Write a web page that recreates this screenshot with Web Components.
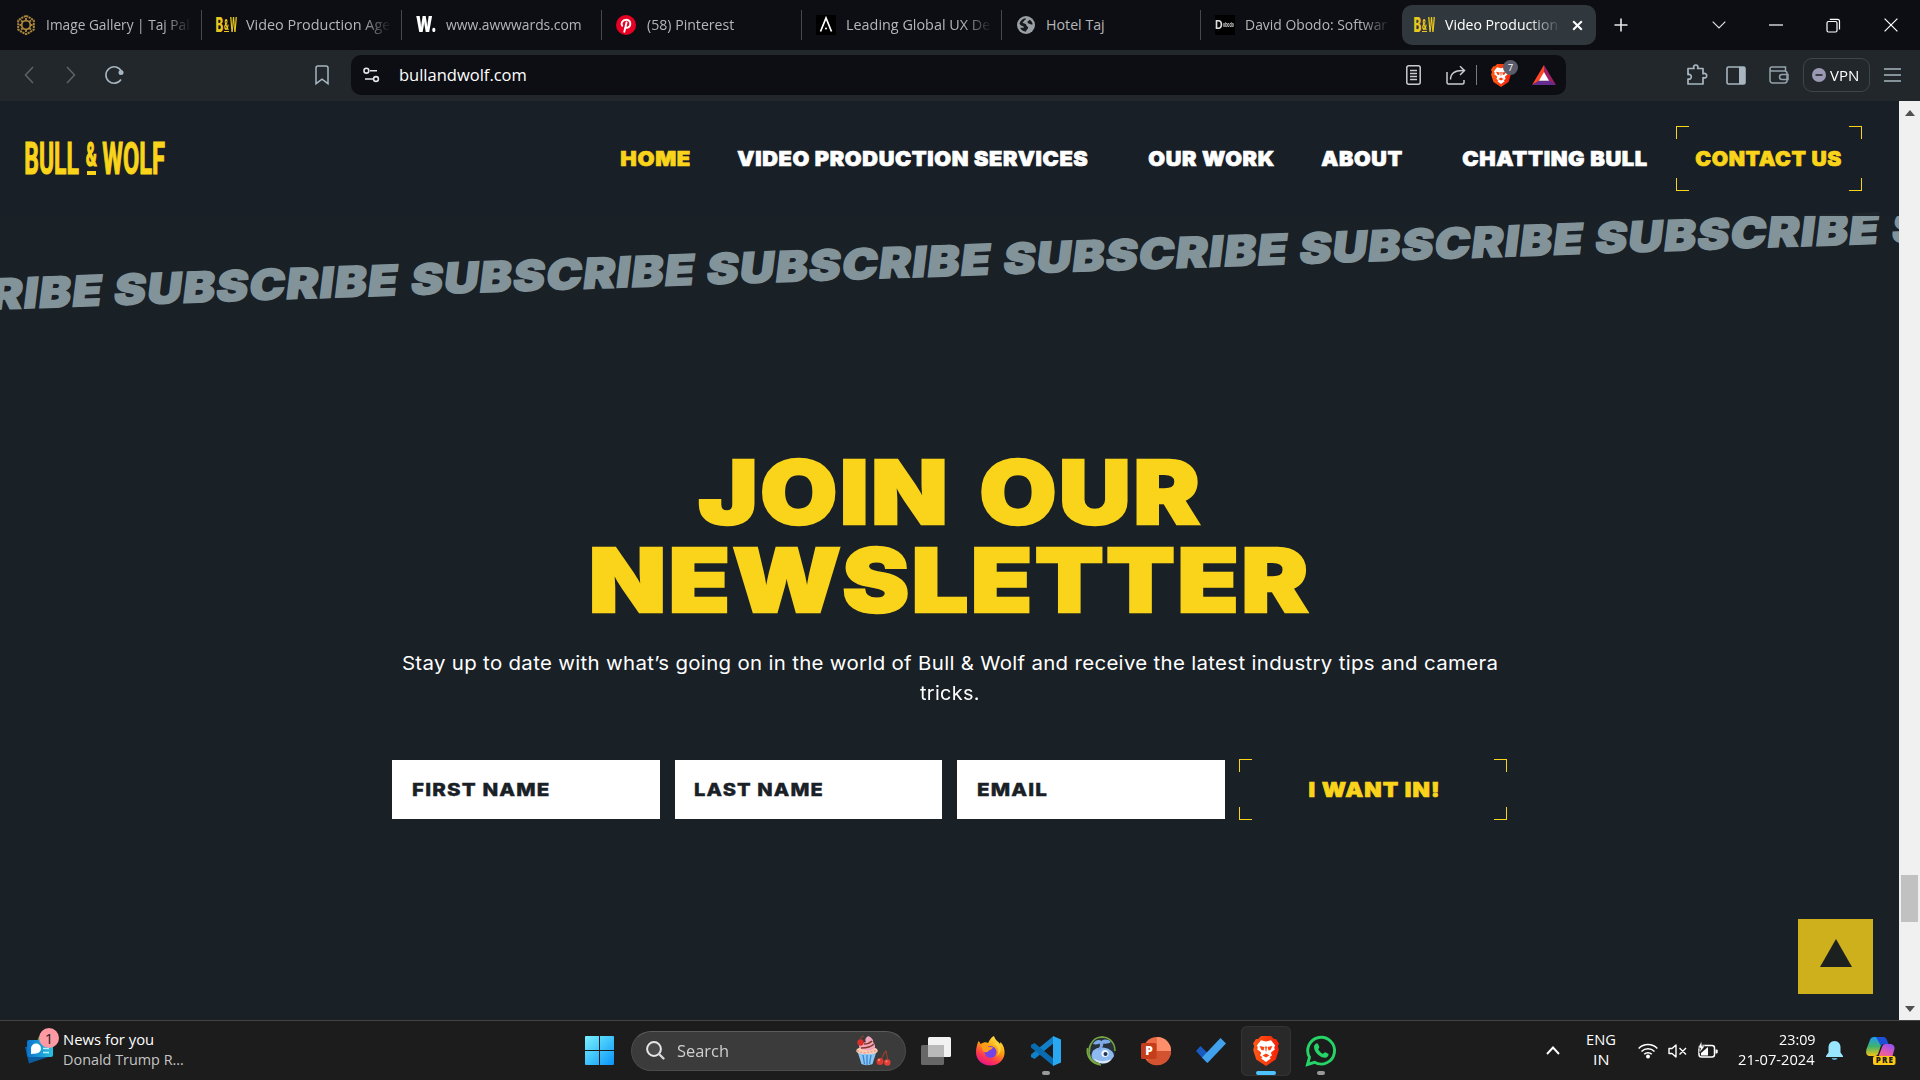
<!DOCTYPE html>
<html lang="en">
<head>
<meta charset="utf-8">
<title>Video Production Agency</title>
<style>
html,body{margin:0;height:100%;background:#192026;overflow:hidden}
body{display:flex;flex-direction:column;width:1920px;height:1080px;font-family:"Open Sans","Noto Sans",sans-serif}
</style>
</head>
<body>
<tab-strip></tab-strip>
<tool-bar></tool-bar>
<web-view></web-view>
<task-bar></task-bar>
<script>
const ICONS = {
taj:[20,20,`<g fill="none" stroke="#a9853c" stroke-width="1.5"><circle cx="10" cy="10" r="4.3" stroke-width="1.8"/><path d="M10 .8l3.6 1.7 4.2 3v9l-4.2 3L10 19.2l-3.600-1.700-4.200-3v-9l4.200-3z" stroke-width="2" stroke-dasharray="2.200 .7"/><path d="M10 3v2.500M10 14.500V17M3.500 10h2.200M14.300 10h2.200M5 5.500l2 1.500M13 13l2 1.500M15 5.500L13 7M7 13l-2 1.500" stroke-width="1.900"/></g>`],
pin:[20,20,`<circle cx="10" cy="10" r="10" fill="#e60023"/><path d="M8.300 16.800L10.600 7.300M9.500 11.800c1 1.800 4.800 1.100 4.800-3.200 0-2.400-1.800-3.900-4.200-3.900-3.900 0-5.500 3.900-3.900 6.100" fill="none" stroke="#fff" stroke-width="1.900" stroke-linecap="round"/>`],
ux:[20,20,`<rect width="20" height="20" fill="#000"/><path d="M4.500 16.500L10 3l5.500 13.500" fill="none" stroke="#fff" stroke-width="1.700"/><circle cx="10" cy="13.500" r="1" fill="#fff"/>`],
globe:[20,20,`<circle cx="10" cy="10" r="9" fill="#9aa0a6"/><path d="M3.500 8.500c1-3 3-4.800 6.200-5.200.5 1.300-.5 2-1.700 2.300.2 1.300-1.200 1.500-1.500 2.500 1.800.3 3.800.6 4 2.300.3 1.300 1.700.9 1.600 2.400-.1 1.600-1.700 1.200-2 3.900-2.800 0-5-1.600-6-3.900h3.500c.9-.7-.1-1.800-1.500-1.900C5 10.500 4 10 3.500 8.500zM11.300 6.700c1.500-.3 1.200-1.700 2.500-2 1.500 1 2.700 2.800 2.900 4.700-1.400.4-2.600.2-3.200-.6-.8-.2-1.700-.6-2.200-2.100z" fill="#171a1f"/>`],
close:[12,12,`<path d="M1.300 1.300l9.400 9.400M10.700 1.300L1.300 10.700" stroke="#fff" stroke-width="2.200"/>`],
plus:[14,14,`<path d="M7 .5v13M.5 7h13" stroke="#e8e8ea" stroke-width="1.600"/>`],
chevd:[14,8,`<path d="M.7.7L7 7l6.300-6.300" fill="none" stroke="#e0e0e0" stroke-width="1.200"/>`],
min:[14,2,`<path d="M0 1h14" stroke="#fff" stroke-width="1.200"/>`],
restore:[15,15,`<rect x="1" y="3.500" width="10" height="10.500" rx="1.500" fill="none" stroke="#fff" stroke-width="1.200"/><path d="M3.800 1.300h7.700a2 2 0 012 2v8.200" fill="none" stroke="#fff" stroke-width="1.200"/>`],
x:[14,14,`<path d="M.6.6l12.800 12.800M13.400.6L.6 13.400" stroke="#fff" stroke-width="1.200"/>`],
back:[10,18,`<path d="M9 1L1.500 9 9 17" fill="none" stroke="#5c6468" stroke-width="1.500"/>`],
fwd:[10,18,`<path d="M1 1l7.500 8L1 17" fill="none" stroke="#5c6468" stroke-width="1.500"/>`],
reload:[20,20,`<path d="M17 14.500A8.200 8.200 0 1117.300 6" fill="none" stroke="#a7b6c0" stroke-width="1.600"/><circle cx="17" cy="7.600" r="2.500" fill="#a7b6c0"/>`],
bookmark:[14,20,`<path d="M1 3a2 2 0 012-2h8a2 2 0 012 2v15.700l-6-4.500-6 4.500z" fill="none" stroke="#a7b6c0" stroke-width="1.500"/>`],
tune:[17,16,`<g fill="none" stroke="#e3e5e8" stroke-width="1.600"><circle cx="3.400" cy="3.700" r="2.400"/><path d="M7 3.700h7M2 12h8"/><circle cx="13" cy="12" r="2.400"/></g>`],
reader:[15,20,`<rect x=".8" y=".8" width="13.400" height="18.400" rx="2" fill="none" stroke="#c8cbd0" stroke-width="1.500"/><path d="M4 5.500h7M4 8.500h7M4 11.500h7M4 14.500h7" stroke="#c8cbd0" stroke-width="1.300"/>`],
share:[20,20,`<g fill="none" stroke="#c8cbd0" stroke-width="1.500"><path d="M1 7v10.500a1.500 1.500 0 001.500 1.500h14a1.500 1.500 0 001.500-1.500V15M4.500 14.500c0-6 4-9.500 13.500-9M14 1.200L18.500 5.500 14 10"/></g>`],
brave:[26,30,`<defs><linearGradient id="b"><stop offset="0" stop-color="#ff5a14"/><stop offset="1" stop-color="#f5200a"/></linearGradient></defs><path d="M8 0h10l3 3h2l3 4.500-1.200 2.600 1 3.900-3 9.500L13 30 3.200 23.500l-3-9.500 1-3.900L0 7.500 3 3h2z" fill="url(#b)"/><path d="M13 5.500l5-1.300 4.200 5.300-1 1.700.5 2.200-3.500 3.600.7 2.500-2.400 1.700 1.300 1.200L13 26l-4.800-3.600 1.300-1.200-2.400-1.700.7-2.500-3.500-3.600.5-2.200-1-1.700L8 4.200z" fill="#fff"/><path d="M6.500 10l5 1-1 3.500-2-.5zM19.500 10l-5 1 1 3.500 2-.5zM9.500 19.500L13 17.500l3.500 2L13 21.500zM12 10.500h2l-.7 5h-.6zM5 14l3 2.500-.5 2zM21 14l-3 2.500.5 2z" fill="#fb4212"/>`],
bat:[24,20,`<path d="M12 0L0 20l12-6.700z" fill="#ff4724"/><path d="M12 0l12 20-7.500-4L12 8z" fill="#9e1f63"/><path d="M0 20h24l-7-4.500H7z" fill="#662d91"/><path d="M12 7l5 8.700H7z" fill="#fff"/>`],
ext:[22,22,`<path d="M2 4.500h6c-1-2 .2-3.500 1.800-3.500s2.800 1.500 1.800 3.500H17v5.300c2-1 3.700.2 3.700 1.900s-1.700 2.900-3.700 1.900V20H2v-5c2 .6 3.300-.5 3.300-2.200S4 10 2 10.600z" fill="none" stroke="#a7b6c0" stroke-width="1.700" stroke-linejoin="round"/>`],
side:[20,19,`<rect x="1" y="1" width="18" height="17" rx="1.500" fill="none" stroke="#a7b6c0" stroke-width="1.600"/><path d="M13 1h6v17h-6z" fill="#a7b6c0"/>`],
wallet:[20,18,`<g fill="none" stroke="#93a2aa" stroke-width="1.500"><path d="M1 2.500v12A2.500 2.500 0 003.500 17h12a2.500 2.500 0 002.500-2.500V7.500A2.500 2.500 0 0015.500 5H3a1.800 1.800 0 010-4h13.500V5"/><path d="M19 8.500h-6a2.500 2.500 0 000 5h6z"/></g>`],
vpn:[14,14,`<circle cx="7" cy="7" r="7" fill="#9a98b2"/><path d="M3.500 7h7" stroke="#22272b" stroke-width="1.600"/>`],
menu:[17,14,`<path d="M0 1h17M0 7h17M0 13h17" stroke="#a7b6c0" stroke-width="1.400"/>`],
tri:[32,28,`<path d="M16 0l16 28H0z" fill="#1c201f"/>`],
up:[10,6,`<path d="M5 0l5 6H0z" fill="#505050"/>`],
down:[10,6,`<path d="M0 0h10L5 6z" fill="#505050"/>`],
news:[28,28,`<defs><linearGradient id="n" x1="0" x2="1"><stop offset="0" stop-color="#0873cf"/><stop offset="1" stop-color="#2cc0df"/></linearGradient></defs><path d="M11 8l3-8h8v10z" fill="#3fa34d"/><path d="M0 11l24-3 2 12L4 27.500z" fill="#0c5ca0"/><rect x="2" y="4" width="26" height="17" rx="2" fill="url(#n)"/><circle cx="11" cy="12.500" r="5" fill="#fff"/><path d="M6 18v-5l5 4.500z" fill="#fff"/><path d="M18 12.500h6M18 16.500h6" stroke="#b8f1ff" stroke-width="1.600"/>`],
win:[29,29,`<defs><linearGradient id="w" x1="0" y1="0" x2="1" y2="1"><stop offset="0" stop-color="#7bf0ff"/><stop offset=".5" stop-color="#3fc4fb"/><stop offset="1" stop-color="#0a93f8"/></linearGradient></defs><path d="M1 0h13v14H0V1a1 1 0 011-1zM15 0h13a1 1 0 011 1v13H15zM0 15h14v14H1a1 1 0 01-1-1zM15 15h14v13a1 1 0 01-1 1H15z" fill="url(#w)"/>`],
search:[19,19,`<circle cx="8" cy="8" r="6.900" fill="#4a4a4a" stroke="#e4e6e8" stroke-width="2"/><path d="M13 13l4.500 4.500" stroke="#d5d8dc" stroke-width="2.400" stroke-linecap="round"/>`],
cake:[36,30,`<path d="M3 17h18l-3.500 11c-3 1.500-8 1.500-11 0z" fill="#8ec7f2"/><path d="M8 19l1.500 9M12 19v10M16 19l-1.500 9" stroke="#3d86d8" stroke-width="1.400"/><path d="M2 13c4-3 17-3 20 0 2 3 0 5-10 5S0 16 2 13z" fill="#f6cfae"/><path d="M2 14.500q5 3 10 2t10-2" fill="none" stroke="#f49aa8" stroke-width="1.600" stroke-dasharray="2 1.500"/><path d="M4 11c0-4 4-4 7-5-2-3 1-5 2-6 3 1 6 4 5 6 2 2 3 5 1 7-3 2-13 2-15-2z" fill="#f3a6bd"/><path d="M6 12c5 0 10-1 13-4M9 8c4 0 6-1 8-3" fill="none" stroke="#843b2c" stroke-width="1.700"/><circle cx="5.500" cy="6.500" r="3.200" fill="#d9302a"/><path d="M5.500 4Q5 1 9 0M26 24q2-6 5-9 1 5 2 10" fill="none" stroke="#9b3f2b" stroke-width="1.100"/><circle cx="25" cy="25.500" r="3.500" fill="#df3a2f"/><circle cx="32.300" cy="26.500" r="3.200" fill="#e5403a"/><circle cx="24" cy="24" r="1" fill="#ff9a80"/><circle cx="31.500" cy="25.300" r=".9" fill="#ff9a80"/>`],
tview:[30,28,`<rect x="0" y="8" width="23" height="20" rx="1.500" fill="#676767"/><rect x="7" y="0" width="23" height="20" rx="1.500" fill="#f2f2f2"/><path d="M7 8h16v12H7z" fill="#b9b9b9"/>`],
fox:[29,30,`<defs><linearGradient id="f" x1=".8" y1="0" x2=".3" y2="1"><stop offset="0" stop-color="#fff04a"/><stop offset=".45" stop-color="#ff980e"/><stop offset=".75" stop-color="#ff3750"/><stop offset="1" stop-color="#e3128c"/></linearGradient></defs><path d="M2.500 5c1 1 1.500 1.500 2 3C8 6 10 6 12 7c1-1 2-5 6-7 1 4 4 5 6 8l.5-2c3 3 4.500 7 4 12-1 7-7 11.500-14 11.500C6 29.500 0 24 0 16c0-4 1-7 2.500-11z" fill="url(#f)"/><circle cx="14.500" cy="16" r="6" fill="#7542e5"/><path d="M5 9c3-1.500 6 0 7 2 2 0 4-.5 5 .5-1 2-3 2-4.500 3.500-2 2-4.500 1-5.500 0z" fill="#ff9a1a"/><path d="M17 8c5 1 7 7 4 12 5-4 5-10 1-14z" fill="#ffd23a"/>`],
code:[30,30,`<path d="M22.500 0v7.500L3.500 23 0 21v-2.500z" fill="#1180c8"/><path d="M0 9l3.500-2 19 15.500V30L0 11.500z" fill="#0a6cb0"/><path d="M22.500 7.500L13.400 15l9.100 7.500z" fill="#1c1c1c"/><path d="M22 0l8 3.500v23L22 30z" fill="#2aa8f2"/>`],
bird:[30,30,`<circle cx="15.500" cy="15" r="13.500" fill="#27313a"/><path d="M5.500 20c0-7 6-8.500 11-8.500S28 15 28 20c-2 4-7 6.500-12 6.500S6 25 5.500 20z" fill="#8db9f0"/><path d="M7 8c2-4 6-5 8.500-3C18 3 22 3 25 6c-2 1.500-5 2-7.500 1.500-.5 2.500-1 4.500-3.500 7l-3-1c3-2 3.500-4 2.500-6C11.500 8.500 9 8.700 7 8z" fill="#7eaae8"/><path d="M8 22.500q7 5 18 .5-4 5-10 4.500T8 22.500z" fill="#dce9f8"/><circle cx="19" cy="17.500" r="3.600" fill="#eef6ff"/><circle cx="19.500" cy="18" r="2" fill="#1e3552"/><path d="M15 29C5 28 0 20 1.500 12M20 1.500C9-1 3 7 3.500 16M29 15C29 5 21-1 13 1.500M7 5C0 13 2 26 14 28" fill="none" stroke="#78a840" stroke-width="1.500"/>`],
ppt:[30,28,`<circle cx="16" cy="14" r="14" fill="#ed6c47"/><path d="M16 0a14 14 0 0114 14H16z" fill="#ff8f6b"/><path d="M16 14h14A14 14 0 016 24z" fill="#d35230"/><rect x="0" y="6" width="15.500" height="16" rx="1.500" fill="#c43e1c"/><text x="4.200" y="18.300" font-family="Open Sans" font-weight="800" font-size="12" fill="#fff">P</text>`],
todo:[30,25,`<path d="M4.500 8L15.500 19l-5 5.500L0 13z" fill="#185abd"/><path d="M24.500 0L30 5.500 11.500 25 6 19.500z" fill="#42a1ec"/>`],
wa:[30,30,`<path d="M1.500 28.500l2-7.200a13.400 13.400 0 115 5z" fill="#1c1c1c" stroke="#25d366" stroke-width="2.900"/><path d="M9.500 8c1.500-1.500 2.500-.5 3 1l.8 2c.2 1-1.300 1.800-1 2.500 1 2 2.500 3.300 4.500 4.200.8.200 1.500-1.700 2.400-1.400l3 1.500c1 .7-.2 3.500-2.500 4-4 .8-12-5-11.700-11 0-1 .5-2 1.500-2.800z" fill="#25d366"/>`],
chevu:[14,9,`<path d="M1 8l6-6.500L13 8" fill="none" stroke="#fff" stroke-width="1.900"/>`],
wifi:[20,16,`<g fill="none" stroke="#fff" stroke-width="1.500"><path d="M.7 5.500a13 13 0 0118.600 0M3.500 8.500a9.200 9.200 0 0113 0M6.200 11.300a5.300 5.300 0 017.600 0"/></g><circle cx="10" cy="13.500" r="2" fill="#fff"/>`],
mute:[19,14,`<path d="M1 4.500h3L8 1v12L4 9.500H1zM11.500 4l6.500 6.500M18 4l-6.500 6.500" fill="none" stroke="#fff" stroke-width="1.400" stroke-linejoin="round"/>`],
batt:[20,17,`<rect x="1" y="4.500" width="15.500" height="11.500" rx="2.500" fill="none" stroke="#fff" stroke-width="1.500"/><path d="M17.500 8.500h1.200a1 1 0 011 1v2a1 1 0 01-1 1h-1.200z" fill="#fff"/><path d="M3 14.500V12l7-6v8.500z" fill="#fff"/><path d="M3.500 0L0 7h2.500L1.500 12 7 5H4z" fill="#fff" stroke="#1c1c1c" stroke-width=".6"/>`],
bell:[17,20,`<path d="M8.500 0c4 0 6 3 6 6.500v5L17 15v1H0v-1l2.500-3.500v-5C2.500 3 4.500 0 8.500 0z" fill="#98e6ff"/><path d="M5.500 17h6q-.5 2-3 2t-3-2z" fill="#5bb0cc"/>`],
pilot:[30,28,`<defs><linearGradient id="p" x1="0" y1="0" x2="0" y2="1"><stop offset="0" stop-color="#1f9bf0"/><stop offset=".5" stop-color="#3fb36b"/><stop offset="1" stop-color="#f4c415"/></linearGradient><linearGradient id="q" x1=".7" y1="0" x2=".2" y2="1"><stop offset="0" stop-color="#9a52f0"/><stop offset=".5" stop-color="#e85aa8"/><stop offset="1" stop-color="#fb7a4a"/></linearGradient></defs><path d="M8 0h10l-6 17q-1 2-3 2H3Q-1 18 .5 12L4 3q1-3 4-3z" fill="url(#p)"/><path d="M10 0h7q3 0 4 3l1.500 4H18q-2 0-3 2z" fill="#1d4fd8"/><path d="M19 7h6q4 1 3.500 5L25 24H9l3-3 4-11q1-3 3-3z" fill="url(#q)"/><rect x="7" y="19" width="22.500" height="9" rx="2" fill="#ffc814"/><text x="9.800" y="26.400" font-family="Open Sans" font-weight="800" font-size="8" textLength="17" fill="#1c1c1c">PRE</text>`]
};
const make=(tag,html,hook)=>customElements.define(tag,class extends HTMLElement{
  connectedCallback(){
    if(this.shadowRoot)return;
    const t=document.createElement('template');
    t.innerHTML=typeof html==='function'?html(this):html;
    this.attachShadow({mode:'open'}).append(t.content.cloneNode(true));
    if(hook)hook(this);
  }
});
make('ui-icon',el=>{
  const [w,h,body]=ICONS[el.getAttribute('name')];
  const W=el.getAttribute('w')||w,H=el.getAttribute('h')||h;
  return `<style>:host{display:block;flex:none;width:${W}px;height:${H}px}svg{display:block;overflow:visible}</style><svg width="${W}" height="${H}" viewBox="0 0 ${w} ${h}" preserveAspectRatio="none">${body}</svg>`;
});
/* Text whose ink is stretched to an exact width. */
const ctx=document.createElement('canvas').getContext('2d');
make('fit-text',el=>`<style>:host{display:block;flex:none;width:${el.getAttribute('w')}px;white-space:pre}span{display:inline-block;transform-origin:0 50%}</style><span><slot></slot></span>`,el=>{
  const c=getComputedStyle(el);
  ctx.font=`${c.fontWeight} ${c.fontSize} ${c.fontFamily}`;
  ctx.letterSpacing=c.letterSpacing==='normal'?'0px':c.letterSpacing;
  ctx.wordSpacing=c.wordSpacing==='normal'?'0px':c.wordSpacing;
  const m=ctx.measureText(el.textContent);
  const stroke=parseFloat(c.webkitTextStrokeWidth)||0;
  const L=m.actualBoundingBoxLeft+stroke/2,ink=L+m.actualBoundingBoxRight+stroke/2;
  el.shadowRoot.querySelector('span').style.transform=`scaleX(${el.getAttribute('w')/ink}) translateX(${L}px)`;
});
make('bw-mark',`<style>:host{display:flex;flex:none;width:20px;height:20px;align-items:center;font:800 20px/20px Inter,sans-serif;color:#e9c81e;gap:1px}.a{font-size:14px}span{display:block;border-bottom:1.500px solid}</style><fit-text w="7">B</fit-text><span><fit-text class="a" w="5" style="line-height:13px">&amp;</fit-text></span><fit-text w="7">W</fit-text>`);
make('browser-tab',el=>`<style>
:host{display:flex;flex:none;box-sizing:border-box;width:200px;height:30px;align-items:center;padding-left:16px;gap:10.500px;color:#b5b6b9;font-size:14.800px;line-height:24px}
.t{flex:none;width:145px;overflow:hidden;margin-top:-2px}
:host([cut]) .t{-webkit-mask-image:linear-gradient(90deg,#000 116px,transparent 145px)}
:host([line]){border-right:1px solid #46484c}
:host([active]){width:194px;height:40px;margin-left:2px;padding-left:12px;background:#30383d;border-radius:10px;color:#fff}
:host([active]) .t{width:114px;-webkit-mask-image:linear-gradient(90deg,#000 83px,transparent 116px)}
</style><slot name="icon"></slot><div class="t"><slot></slot></div><slot name="end"></slot>`);
make('tab-strip',`<style>:host{display:flex;flex:none;height:50px;background:#0d0e13;align-items:center}
.w{font:900 21px/20px Inter,sans-serif;color:#fff}.box{width:20px;height:20px;background:#000;color:#ddd;display:flex;align-items:center;font:700 12px/14px Inter,sans-serif}</style>
<browser-tab line cut style="width:202px"><ui-icon slot="icon" name="taj"></ui-icon><fit-text w="142">Image Gallery | Taj Pal</fit-text></browser-tab>
<browser-tab line cut style="padding-left:13.500px"><bw-mark slot="icon"></bw-mark><fit-text w="144">Video Production Age</fit-text></browser-tab>
<browser-tab line style="padding-left:14px;gap:10px"><fit-text slot="icon" class="w" w="20">W.</fit-text><fit-text w="135">www.awwwards.com</fit-text></browser-tab>
<browser-tab line style="padding-left:14px"><ui-icon slot="icon" name="pin"></ui-icon><fit-text w="87">(58) Pinterest</fit-text></browser-tab>
<browser-tab line cut style="padding-left:14px"><ui-icon slot="icon" name="ux"></ui-icon><fit-text w="143">Leading Global UX De</fit-text></browser-tab>
<browser-tab line style="padding-left:14px;width:199px"><ui-icon slot="icon" name="globe"></ui-icon><fit-text w="57">Hotel Taj</fit-text></browser-tab>
<browser-tab cut style="padding-left:14px;width:199px"><div slot="icon" class="box"><fit-text w="8">D</fit-text><fit-text w="11" style="font-size:6px">obodo</fit-text></div><fit-text w="141">David Obodo: Softwar</fit-text></browser-tab>
<browser-tab active><bw-mark slot="icon"></bw-mark><fit-text w="112">Video Production</fit-text><ui-icon slot="end" name="close" w="11" h="11" style="margin-left:3px"></ui-icon></browser-tab>
<ui-icon name="plus" style="margin-left:18px"></ui-icon>
<ui-icon name="chevd" style="margin-left:84px"></ui-icon>
<ui-icon name="min" style="margin-left:43px"></ui-icon>
<ui-icon name="restore" style="margin-left:43px"></ui-icon>
<ui-icon name="x" style="margin-left:42.500px"></ui-icon>`);
make('tool-bar',`<style>:host{display:flex;flex:none;height:51px;background:#22272b;align-items:center;box-sizing:border-box;padding-bottom:1px}
.addr{display:flex;align-items:center;box-sizing:border-box;width:1215px;height:40px;margin-left:22px;padding-left:12px;background:#0d0e13;border-radius:10px;color:#fff;font-size:16px;line-height:24px}
.sep{width:1px;height:20px;background:#777a80;margin-left:10px}
.br{position:relative;margin-left:14px}.bd{position:absolute;left:12px;top:-4px;width:15px;height:15px;border-radius:8px;background:#5a5c6c;color:#fff;font-size:9.500px;line-height:15px;text-align:center}
.vpn{display:flex;align-items:center;box-sizing:border-box;width:67px;height:34px;margin-left:14px;border:1.500px solid #3e464b;border-radius:9px;padding-left:8px;gap:4px;color:#fff;font-size:15px;line-height:20px}</style>
<ui-icon name="back" style="margin-left:24px"></ui-icon><ui-icon name="fwd" style="margin-left:32px"></ui-icon><ui-icon name="reload" style="margin-left:28px"></ui-icon><ui-icon name="bookmark" style="margin-left:191px"></ui-icon>
<div class="addr"><ui-icon name="tune"></ui-icon><fit-text w="126" style="margin-left:20px">bullandwolf.com</fit-text>
<ui-icon name="reader" style="margin-left:880px"></ui-icon><ui-icon name="share" style="margin-left:25px"></ui-icon><div class="sep"></div>
<div class="br"><ui-icon name="brave" w="20" h="23"></ui-icon><div class="bd">7</div></div><ui-icon name="bat" style="margin-left:21px"></ui-icon></div>
<ui-icon name="ext" style="margin-left:120px"></ui-icon><ui-icon name="side" style="margin-left:18px"></ui-icon><ui-icon name="wallet" style="margin-left:23px"></ui-icon>
<div class="vpn"><ui-icon name="vpn"></ui-icon><fit-text w="28">VPN</fit-text></div><ui-icon name="menu" style="margin-left:14px"></ui-icon>`);
make('corner-frame',`<style>:host{display:flex;align-items:center;justify-content:center;flex:none;box-sizing:border-box;color:#fad41a;
--g:linear-gradient(#fad41a,#fad41a);
background:var(--g) 0 0/13px 1px,var(--g) 0 0/1px 13px,var(--g) 100% 0/13px 1px,var(--g) 100% 0/1px 13px,var(--g) 0 100%/13px 1px,var(--g) 0 100%/1px 13px,var(--g) 100% 100%/13px 1px,var(--g) 100% 100%/1px 13px;background-repeat:no-repeat}</style><slot></slot>`);
make('site-header',`<style>:host{display:flex;flex:none;position:relative;z-index:2;height:115px;align-items:center;background:rgba(25,32,38,.95);font:900 20.500px/26px Inter,sans-serif;color:#fff;letter-spacing:.6px;-webkit-text-stroke:.7px}
.logo{display:flex;align-items:center;margin-left:25px;width:140px;color:#fad41a;font:700 45px/34px Roboto,sans-serif;letter-spacing:0;-webkit-text-stroke:1.200px}
.amp{display:flex;flex-direction:column;height:33px;width:11px;margin:0 5px 0 7px;font-size:34px;line-height:25px;justify-content:space-between}.amp i{display:block;width:9px;margin-left:1px;height:4.500px;background:#fad41a}
nav{display:flex;align-items:center;margin-left:454.500px}</style>
<div class="logo"><fit-text w="54">BULL</fit-text><div class="amp"><fit-text w="11">&amp;</fit-text><i></i></div><fit-text w="63">WOLF</fit-text></div>
<nav><fit-text w="70" style="color:#fad41a">HOME</fit-text><fit-text w="351.500" style="margin-left:47px">VIDEO PRODUCTION SERVICES</fit-text><fit-text w="127" style="margin-left:59.500px">OUR WORK</fit-text><fit-text w="81.500" style="margin-left:46.500px">ABOUT</fit-text><fit-text w="186" style="margin-left:59.500px">CHATTING BULL</fit-text>
<corner-frame style="width:186px;height:65px;margin-left:27.500px"><fit-text w="147">CONTACT US</fit-text></corner-frame></nav>`);
make('subscribe-marquee',`<style>:host{display:block;flex:none;height:180px;padding-top:52.500px;box-sizing:border-box;font:900 42px/50px Inter,sans-serif;color:#82939a;letter-spacing:1.200px;-webkit-text-stroke:1.600px}
.s{display:flex;gap:14.400px;margin-left:-181px;width:2400px;transform:rotate(-2deg);transform-origin:181px 50%}.s fit-text{transform:skewX(-9deg)}</style>
<div class="s">${'<fit-text w="282">SUBSCRIBE</fit-text>'.repeat(8)}</div>`);
make('news-field',`<style>:host{display:flex;align-items:center;box-sizing:border-box;width:267.500px;height:59px;padding-left:20.500px;background:#fff;color:#192026;font:800 18px/24px Inter,sans-serif;letter-spacing:1px;-webkit-text-stroke:.4px}</style><slot></slot>`);
make('newsletter-form',`<style>:host{display:flex;flex-direction:column;align-items:center;margin-top:52px;color:#fff;font:400 19.300px/30px Inter,sans-serif}
.h{display:flex;flex-direction:column;align-items:center;font-weight:900;font-size:87.800px;line-height:88px;letter-spacing:2px;color:#fad41a;-webkit-text-stroke:2.400px}.p{display:flex;flex-direction:column;align-items:center;margin-top:24px;letter-spacing:.3px}
.f{display:flex;align-items:center;gap:15px;margin-top:51px;height:61px}</style>
<div class="h"><fit-text w="502.500" style="word-spacing:6px">JOIN OUR</fit-text><fit-text w="717" style="margin-left:1px">NEWSLETTER</fit-text></div>
<div class="p"><fit-text w="1094">Stay up to date with what’s going on in the world of Bull &amp; Wolf and receive the latest industry tips and camera</fit-text><fit-text w="59">tricks.</fit-text></div>
<div class="f"><news-field><fit-text w="136.500">FIRST NAME</fit-text></news-field><news-field><fit-text w="128">LAST NAME</fit-text></news-field><news-field><fit-text w="69">EMAIL</fit-text></news-field>
<corner-frame style="width:268px;height:61px;margin-left:-.5px;font-weight:900;font-size:20.500px;letter-spacing:1px;-webkit-text-stroke:.7px"><fit-text w="131">I WANT IN!</fit-text></corner-frame></div>`);
make('scroll-bar',`<style>:host{display:flex;flex-direction:column;align-items:center;flex:none;width:21px;background:#f0f0f0}.th{width:17px;height:47px;background:#c1c1c1;margin:759px 0 84px}</style><ui-icon name="up" style="margin-top:9px"></ui-icon><div class="th"></div><ui-icon name="down"></ui-icon>`);
make('web-view',`<style>:host{display:flex;flex:none;height:919px;background:#192026}
.page{position:relative;display:flex;flex-direction:column;width:1899px;overflow:hidden}
.top{position:absolute;right:26px;bottom:26px;width:75px;height:75px;box-sizing:border-box;padding:20px 0 0 22px;background:#cdb01c}</style>
<div class="page"><site-header></site-header><subscribe-marquee></subscribe-marquee><newsletter-form></newsletter-form><div class="top"><ui-icon name="tri"></ui-icon></div></div><scroll-bar></scroll-bar>`);
make('task-app',`<style>:host{display:flex;flex:none;flex-direction:column;align-items:center;justify-content:center;box-sizing:border-box;position:relative;width:50px;height:50px;border-radius:6px}
:host([open])::after,:host([active])::after{content:"";position:absolute;bottom:1px;width:8px;height:4px;border-radius:2px;background:#999}
:host([active]){background:#292929;box-shadow:inset 0 0 0 1px #333}:host([active])::after{width:20px;background:#4cc2ff}</style><slot></slot>`);
make('task-bar',`<style>:host{display:flex;flex:none;box-sizing:border-box;height:60px;background:#1c1c1c;border-top:1px solid #444;align-items:center;color:#fff;font-size:15px;line-height:20px}
.news{position:relative;margin-left:25px;margin-top:-2px}.bd{position:absolute;left:14px;top:-8px;width:20px;height:20px;border-radius:10px;background:#ff99a4;color:#222;line-height:20px;text-align:center}
.s{display:flex;align-items:center;box-sizing:border-box;width:275px;height:40px;margin-left:17px;border-radius:20px;background:#3b3b3b;border:1px solid #4b4b4b;border-top-color:#5c5c5c;padding-left:14px;color:#cfcfcf;font-size:16.300px}
.apps{display:flex;gap:5px;margin-left:4.500px}.c{display:flex;flex-direction:column;padding-bottom:4px}.e{align-items:flex-end}.m{align-items:center;padding-bottom:3px}</style>
<div class="news"><ui-icon name="news"></ui-icon><div class="bd">1</div></div>
<div class="c" style="margin-left:11px"><fit-text w="89">News for you</fit-text><fit-text w="119" style="color:#c5c5c5">Donald Trump R...</fit-text></div>
<ui-icon name="win" style="margin-left:402px"></ui-icon>
<div class="s"><ui-icon name="search"></ui-icon><fit-text w="51" style="margin-left:12px">Search</fit-text><ui-icon name="cake" style="margin-left:127px"></ui-icon></div>
<div class="apps"><task-app><ui-icon name="tview"></ui-icon></task-app><task-app><ui-icon name="fox"></ui-icon></task-app><task-app open><ui-icon name="code"></ui-icon></task-app><task-app><ui-icon name="bird"></ui-icon></task-app><task-app><ui-icon name="ppt"></ui-icon></task-app><task-app><ui-icon name="todo"></ui-icon></task-app><task-app active><ui-icon name="brave"></ui-icon></task-app><task-app open><ui-icon name="wa"></ui-icon></task-app></div>
<ui-icon name="chevu" style="margin-left:200px"></ui-icon>
<div class="c m" style="margin-left:27px"><fit-text w="28">ENG</fit-text><fit-text w="14">IN</fit-text></div>
<ui-icon name="wifi" style="margin-left:23px"></ui-icon><ui-icon name="mute" style="margin-left:10px"></ui-icon><ui-icon name="batt" style="margin-left:11px;margin-top:-3px"></ui-icon>
<div class="c e" style="margin-left:20.500px"><fit-text w="36">23:09</fit-text><fit-text w="77">21-07-2024</fit-text></div>
<ui-icon name="bell" style="margin-left:11px"></ui-icon><ui-icon name="pilot" style="margin-left:23px"></ui-icon>`);
</script>
</body>
</html>
